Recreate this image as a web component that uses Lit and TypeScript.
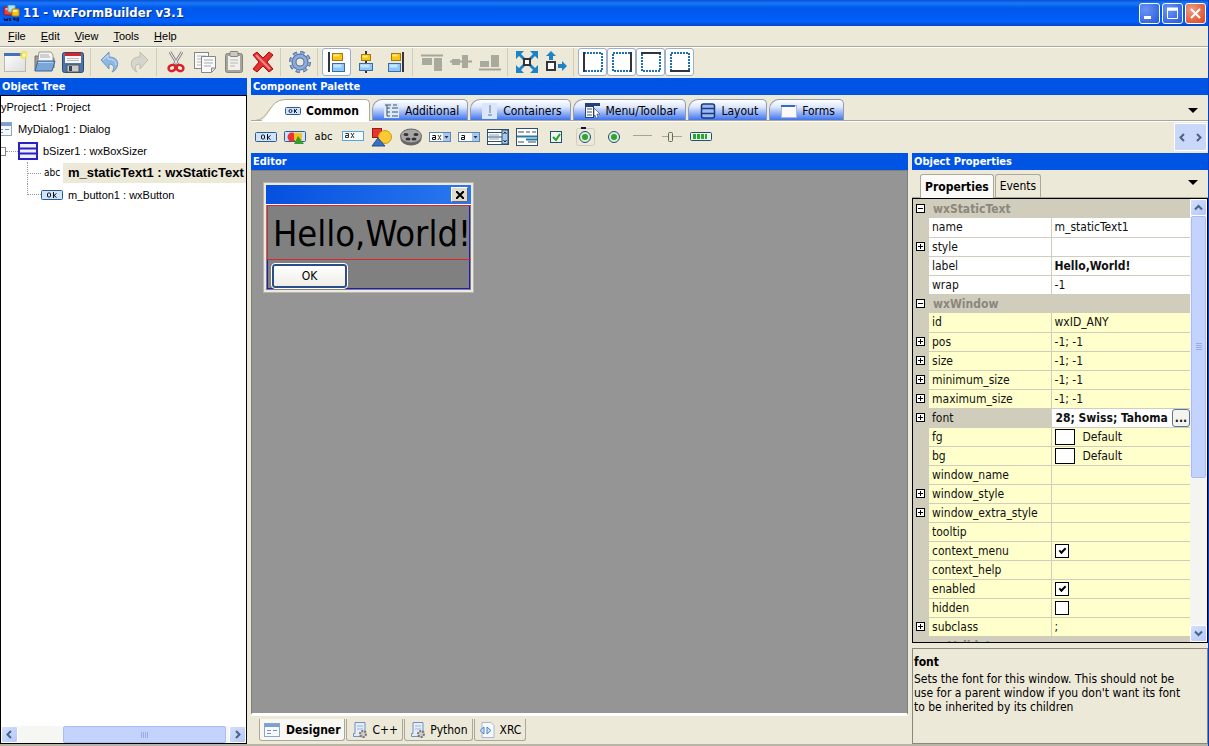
import { LitElement, html, css, svg, nothing, TemplateResult } from "lit";
import { customElement } from "lit/decorators.js";
import { classMap } from "lit/directives/class-map.js";

const icon = (w: number, h: number, body: unknown) =>
  html`<svg width=${w} height=${h} viewBox="0 0 ${w} ${h}" aria-hidden="true">${body}</svg>`;

const appIcon = icon(18, 17, svg`
  <rect x="1" y="2" width="8" height="8" rx="1" fill="#e5453a" stroke="#a11"/><rect x="2.500" y="3" width="4" height="2" fill="#ffa9a0"/>
  <rect x="5" y="0" width="7" height="7" rx="1" fill="#a9e3f5" stroke="#6ab"/>
  <rect x="9" y="4" width="7" height="7" rx="1" fill="#f6c21e" stroke="#b80"/><rect x="10" y="5" width="4" height="2" fill="#fff0a0"/>
  <path d="M1 13l1 3 1-2 1 2 1-3M6 13l2 3M8 13l-2 3M12 16v-3h-2M10 14.500h2M14 13v3h1.500v-3z" stroke="#112" fill="none"/>`);

const T = {
  fresh: icon(24, 24, svg`<defs><linearGradient id="nf" x2="1" y2="1"><stop stop-color="#fff"/><stop offset="1" stop-color="#dcdcdc"/></linearGradient></defs>
    <rect x="1.500" y="3.500" width="21" height="18" fill="url(#nf)" stroke="#b9b9b3"/><rect x="1" y="3" width="20" height="3" fill="#4272b8"/>
    <circle cx="21" cy="5" r="4" fill="#f4e04a" opacity=".8"/><circle cx="21" cy="5" r="2" fill="#fff7a0"/>`),
  open: icon(24, 24, svg`<path d="M3 21V6h6l2 2h11v10" fill="#9a9a96" stroke="#777"/><path d="M6 10l1-8h12l2 3v8H6z" fill="#f6f6f6" stroke="#999"/>
    <path d="M8 5h9M8 7h10" stroke="#aaa"/><path d="M3 21l3-10h17l-3 10z" fill="#7ba7d8" stroke="#3465a4"/><path d="M6 12.500h15" stroke="#b4d0ee"/>`),
  save: icon(24, 24, svg`<rect x="1.500" y="2.500" width="21" height="20" rx="2" fill="#4d74a8" stroke="#2b4a78"/><rect x="4" y="3" width="16" height="10" fill="#f6f6f6"/>
    <rect x="4" y="3" width="16" height="3" fill="#d22"/><path d="M6 8.500h12M6 10.500h12" stroke="#bbb"/><rect x="6" y="15" width="12" height="7" fill="#c9cbc9" stroke="#555"/><rect x="8" y="16" width="3" height="5" fill="#345"/>`),
  undo: icon(24, 24, svg`<path d="M3 10L11 2v5c7 0 10 4 8 10-1 2-2 4-5 5 3-4 2-8-3-8v5z" fill="#8fb9e2" stroke="#6f97c4"/>
    <path d="M5 10l5-5v4c5 0 8 2 8 6" stroke="#cfe2f4" fill="none"/>`),
  redo: icon(24, 24, svg`<path d="M21 10L13 2v5c-7 0-10 4-8 10 1 2 2 4 5 5-3-4-2-8 3-8v5z" fill="#d6d6ce" stroke="#bdbdb3"/>`),
  cut: icon(24, 24, svg`<path d="M6 2l8 13M18 2l-8 13" stroke="#8d8d8d" stroke-width="3"/><path d="M6 2l8 13M18 2l-8 13" stroke="#eee"/>
    <ellipse cx="8" cy="18" rx="3.500" ry="3" fill="none" stroke="#d5232b" stroke-width="2.500" transform="rotate(-25 8 18)"/>
    <ellipse cx="16" cy="18" rx="3.500" ry="3" fill="none" stroke="#d5232b" stroke-width="2.500" transform="rotate(25 16 18)"/>`),
  copy: icon(24, 24, svg`<rect x="1.500" y="2.500" width="14" height="16" fill="#fafafa" stroke="#85858a"/><path d="M4 6h9M4 9h4M4 12h4M4 15h4" stroke="#b5b5b5"/>
    <path d="M8.500 6.500h14v12l-4 4h-10z" fill="#fafafa" stroke="#85858a"/><path d="M11 10h9M11 13h9M11 16h7" stroke="#a9a9a9"/><path d="M18.500 22v-4h4" fill="#ddd" stroke="#85858a"/>`),
  paste: icon(24, 24, svg`<rect x="3.500" y="3.500" width="17" height="19" rx="2" fill="#a5a59c" stroke="#85857c"/><rect x="6" y="6" width="12" height="14" fill="#f0f0ec"/>
    <rect x="8" y="1.500" width="8" height="5" rx="1" fill="#c8c8c0" stroke="#85857c"/><path d="M8 10h8M8 13h8M8 16h5" stroke="#b8b8b0"/>`),
  del: icon(24, 24, svg`<path d="M2 5l4-3 6 6 6-6 4 3-6 7 6 7-4 3-6-6-6 6-4-3 6-7z" fill="#e03030" stroke="#a80d0d"/><path d="M5 5l14 14" stroke="#f58a8a" stroke-width="2"/>`),
  gear: icon(24, 24, svg`<circle cx="12" cy="12" r="9" fill="none" stroke="#4d6ea6" stroke-width="4" stroke-dasharray="4 3.068"/>
    <circle cx="12" cy="12" r="6" fill="none" stroke="#4d6ea6" stroke-width="5"/><circle cx="12" cy="12" r="6" fill="none" stroke="#8fabd6" stroke-width="3"/><circle cx="12" cy="12" r="9" fill="none" stroke="#8fabd6" stroke-width="2" stroke-dasharray="3 4.068" stroke-dashoffset="-.5"/>`),
};
const yellow = (x: number, y: number, w: number, h: number) =>
  svg`<rect x=${x} y=${y} width=${w} height=${h} fill="#ffc20e" stroke="#a47a10"/><rect x=${x + 1} y=${y + 1} width=${w - 4} height="2" fill="#ffee90"/>`;
const blue = (x: number, y: number, w: number, h: number) =>
  svg`<rect x=${x} y=${y} width=${w} height=${h} fill="#8cc6ff" stroke="#3b6ea5"/><rect x=${x + 1} y=${y + 1} width=${w - 4} height="3" fill="#c9e6ff"/>`;
const A = {
  left: icon(24, 24, svg`<path d="M4 2v20" stroke="#33333d" stroke-width="2"/>${yellow(7.5, 3.5, 10, 7)}${blue(7.5, 13.5, 12, 8)}`),
  mid: icon(24, 24, svg`<path d="M12 1v22" stroke="#33333d" stroke-width="2"/>${yellow(7.5, 4.5, 9, 6)}${blue(5.5, 13.5, 13, 7)}`),
  right: icon(24, 24, svg`<path d="M20 2v20" stroke="#33333d" stroke-width="2"/>${yellow(8.5, 3.5, 9, 7)}${blue(5.5, 13.5, 12, 8)}`),
  top: icon(24, 24, svg`<path d="M1 5.500h22" stroke="#a5a597" stroke-width="2"/><rect x="2" y="8" width="10" height="7" fill="#a9a99c"/><rect x="14" y="8" width="8" height="13" fill="#a9a99c"/>`),
  vmid: icon(24, 24, svg`<path d="M1 11.500h22" stroke="#a5a597" stroke-width="2"/><rect x="3" y="9" width="8" height="6" fill="#a9a99c"/><rect x="13" y="5" width="6" height="13" fill="#a9a99c"/>`),
  bottom: icon(24, 24, svg`<path d="M1 19.500h22" stroke="#a5a597" stroke-width="2"/><rect x="2" y="11" width="9" height="6" fill="#a9a99c"/><rect x="13" y="5" width="8" height="12" fill="#a9a99c"/>`),
  expand: icon(24, 24, svg`<g fill="#1c84c6" stroke="none"><path d="M1 1h8l-3 3 4 4-2 2-4-4-3 3zM23 1h-8l3 3-4 4 2 2 4-4 3 3zM1 23h8l-3-3 4-4-2-2-4 4-3-3zM23 23h-8l3-3-4-4 2-2 4 4 3-3z"/></g><rect x="9" y="9" width="6" height="6" fill="#fff" stroke="#33333d" stroke-width="2"/>`),
  stretch: icon(24, 24, svg`<g fill="#1c84c6"><path d="M7 1l5 5H9v4H5V6H2zM23 16l-5-5v3h-4v4h4v3z"/></g><rect x="3" y="12" width="8" height="8" fill="#fff" stroke="#33333d" stroke-width="2"/>`),
};
const border = (side: string) => icon(24, 24, svg`<rect x="3" y="3" width="18" height="18" fill="#fff" stroke="#1d6fb8" stroke-width="2" stroke-dasharray="2 1"/>
  <path d=${side} stroke="#33333d" stroke-width="2"/>`);
const borders = ["M3 2v20", "M21 2v20", "M2 3h20", "M2 21h20"].map(border);

const okIcon = (small = false) => small
  ? icon(16, 10, svg`<rect x=".5" y="1.500" width="15" height="7" rx="1" fill="#cfe4fb" stroke="#2b5a94"/><circle cx="5.500" cy="5" r="1.500" fill="none" stroke="#124"/><path d="M9.500 3v4M12 3l-2 2 2 2" stroke="#124" fill="none"/>`)
  : icon(22, 11, svg`<rect x=".5" y=".5" width="21" height="9" rx="1" fill="#cfe4fb" stroke="#2b5a94"/><rect x="6.500" y="3" width="3" height="4" rx="1" fill="none" stroke="#111"/><path d="M12.500 2v6M15.500 3.500l-2.500 2 2.500 2" stroke="#111" fill="none"/>`);
const sizer = (c: string, bg: string, w = 20) => icon(w, 18, svg`<rect x="1" y="1" width=${w - 2} height="16" fill=${bg} stroke=${c} stroke-width="2"/><path d="M1 6.500h${w - 2}M1 11.500h${w - 2}" stroke=${c} stroke-width="2"/>`);
const layoutIcon = icon(16, 16, svg`<rect x="1.500" y="1" width="13" height="14" rx="2" fill="#9db8f0" stroke="#173a80" stroke-width="1.500"/><path d="M1 5.500h14M1 10.500h14" stroke="#173a80" stroke-width="1.500"/>`);
const formIcon = icon(16, 16, svg`<rect x=".5" y="1.500" width="15" height="13" fill="#f7f9fc" stroke="#8aa4cc"/><rect x="1" y="2" width="14" height="3" fill="#7d9fd0"/><path d="M3 8.500h4M9 8.500h4M3 11.500h4" stroke="#7090c0"/>`);

const combo = (body: unknown) => icon(24, 24, svg`<rect x="1.500" y="7.500" width="21" height="9" fill="#fff" stroke="#5b83b5"/><rect x="15" y="8" width="7" height="8" fill="#a8c8ec"/><path d="M16.500 11h4l-2 2.500z" fill="#234"/>${body}`);
const littleA = svg`<path d="M4.500 10.500h3v4h-3v-2h3" stroke="#111" fill="none"/>`;
const P: TemplateResult[] = [
  okIcon(),
  icon(22, 14, svg`<rect x=".5" y="1.500" width="21" height="10" rx="1" fill="#cfe4fb" stroke="#2b5a94"/><circle cx="8" cy="7" r="4.500" fill="#e33"/><rect x="10" y="3" width="8" height="7" fill="#f6c21e"/><path d="M10 14l4-8 6 8z" fill="#3a9c2d"/>`),
  html`<span class="abc">abc</span>`,
  icon(24, 24, svg`<rect x="1.500" y="6.500" width="21" height="9" fill="#f4fbff" stroke="#5aa5d8"/><path d="M4.500 8.500h3v4h-3v-2h3M10 8l3 5M13 8l-3 5" stroke="#333" fill="none"/>`),
  icon(24, 24, svg`<rect x="2.500" y="3.500" width="9" height="9" fill="#e5352c" stroke="#9c1b14"/><circle cx="15" cy="12" r="6.500" fill="#f9ca34" stroke="#d39a10"/><path d="M2 21l6-8 7 8z" fill="#3b6fc0" stroke="#234d90"/>`),
  icon(24, 24, svg`<ellipse cx="12" cy="14" rx="10.500" ry="6.500" fill="#666"/><ellipse cx="12" cy="11" rx="10.500" ry="7" fill="#a7a7a7" stroke="#666"/><g fill="#333"><ellipse cx="7" cy="9.500" rx="2.500" ry="1.500"/><ellipse cx="17" cy="9.500" rx="2.500" ry="1.500"/><ellipse cx="9" cy="14" rx="2.500" ry="1.500"/><ellipse cx="15" cy="14" rx="2.500" ry="1.500"/></g>`),
  combo(svg`${littleA}<path d="M10 10l3 5M13 10l-3 5" stroke="#444"/>`),
  combo(littleA),
  icon(24, 24, svg`<rect x="1.500" y="4.500" width="21" height="15" fill="#fff" stroke="#2d5170"/><path d="M2 7.500h14M2 12h14M2 16.500h14" stroke="#2d5170"/><path d="M3 10h10M3 14h10" stroke="#8ba4b8"/><rect x="16" y="5" width="6" height="14" fill="#a8c8ec" stroke="#2d5170"/><path d="M17.500 9l1.500-2 1.500 2M17.500 15l1.500 2 1.500-2" fill="none" stroke="#123"/>`),
  icon(24, 24, svg`<rect x="1.500" y="3.500" width="21" height="17" fill="#fff" stroke="#2d5170"/><path d="M3 7h6M11 7h4M17 7h4M3 17h6M13 17h8" stroke="#446"/><path d="M2 11.500h20M11 14.500h11" stroke="#2a7aa8" stroke-width="2"/>`),
  icon(24, 24, svg`<rect x="6.500" y="6.500" width="11" height="11" fill="#eef5ee" stroke="#22506e"/><path d="M9 12l3 3 4-6" fill="none" stroke="#22a12c" stroke-width="2"/>`),
  icon(24, 24, svg`<rect x="3.500" y="3.500" width="18" height="17" rx="2" fill="none" stroke="#d0cdbd"/><path d="M8 3h5" stroke="#114" stroke-width="2"/><circle cx="12" cy="12" r="5.500" fill="#dce9dc" stroke="#22506e"/><circle cx="12" cy="12" r="3" fill="#2ba52f"/>`),
  icon(24, 24, svg`<circle cx="12" cy="12" r="5.500" fill="#dce9dc" stroke="#22506e"/><circle cx="12" cy="12" r="3" fill="#2ba52f"/>`),
  icon(24, 24, svg`<path d="M2 10.500h19" stroke="#a8a690"/>`),
  icon(24, 24, svg`<path d="M2 11.500h20" stroke="#a8a690"/><rect x="8.500" y="7.500" width="4" height="9" rx="1" fill="#e8e8d8" stroke="#666b50"/>`),
  icon(24, 24, svg`<rect x="1.500" y="7.500" width="21" height="8" rx="1" fill="#e8f2e8" stroke="#22506e"/><path d="M4 11.500h14" stroke="#2ba52f" stroke-width="5" stroke-dasharray="3 1"/>`),
];

const tabIcons = {
  tree: icon(16, 16, svg`<rect width="15" height="15" fill="#dfe9f5"/><path d="M1 2h6M3 2v11M3 5h3M3 9h3M3 13h3M8 5h6M8 9h6M8 13h6M9 2h4" stroke="#357"/>`),
  box: icon(16, 16, svg`<rect width="15" height="16" fill="#dce6f8"/><path d="M8 2v8M6 12h4" stroke="#579"/>`),
  menu: icon(16, 16, svg`<rect width="15" height="3" fill="#24407c"/><rect x=".5" y="3.500" width="8" height="11" fill="#fff" stroke="#24407c"/><path d="M2 6h5M2 9h5M2 12h5" stroke="#357"/><path d="M9 5l6 6h-3l1 4-2 0-1-3-1 1z" fill="#fff" stroke="#345" stroke-width=".6"/>`),
  form: icon(16, 16, svg`<rect x=".5" y="2.500" width="15" height="12" fill="#fafafa" stroke="#a7b8d6"/><rect y="2" width="14" height="2" fill="#3b68c0"/>`),
  script: icon(18, 18, svg`<path d="M4 1.500h10v12l-2 2H2.500v-3H4z" fill="#e3ecf8" stroke="#7392bf"/><path d="M6 5h6M6 8h6" stroke="#9db5d8"/><circle cx="12" cy="13" r="3" fill="#ccc" stroke="#777" stroke-width="2" stroke-dasharray="2 1"/>`),
  xml: icon(18, 18, svg`<path d="M3 1.500h9l3 3v12H3z" fill="#f7f9fc" stroke="#a9b8cc"/><path d="M5 6L1 9.500 5 13zM8 6l4 3.500L8 13z" fill="#cfe0f4" stroke="#4a86c8"/>`),
};

const chevron = (d: string) => icon(9, 9, svg`<path d=${d} fill="none" stroke="#4d6185" stroke-width="2"/>`);
const UP = "M1 6.500l3.500-3.500L8 6.500", DOWN = "M1 2.500L4.500 6 8 2.500", LEFT = "M6 1L2.500 4.500 6 8", RIGHT = "M3 1l3.500 3.500L3 8";

interface Row {
  name: string; value?: string; category?: boolean; nested?: boolean; open?: "+" | "-"; bold?: boolean;
  own?: boolean; kind?: "check" | "color" | "edit"; checked?: boolean;
}
const rows: Row[] = [
  { name: "wxStaticText", category: true, open: "-" },
  { name: "name", value: "m_staticText1", own: true },
  { name: "style", open: "+", own: true },
  { name: "label", value: "Hello,World!", bold: true, own: true },
  { name: "wrap", value: "-1", own: true },
  { name: "wxWindow", category: true, open: "-" },
  { name: "id", value: "wxID_ANY" },
  { name: "pos", value: "-1; -1", open: "+" },
  { name: "size", value: "-1; -1", open: "+" },
  { name: "minimum_size", value: "-1; -1", open: "+" },
  { name: "maximum_size", value: "-1; -1", open: "+" },
  { name: "font", value: "28; Swiss; Tahoma", open: "+", kind: "edit" },
  { name: "fg", value: "Default", kind: "color" },
  { name: "bg", value: "Default", kind: "color" },
  { name: "window_name" },
  { name: "window_style", open: "+" },
  { name: "window_extra_style", open: "+" },
  { name: "tooltip" },
  { name: "context_menu", kind: "check", checked: true },
  { name: "context_help" },
  { name: "enabled", kind: "check", checked: true },
  { name: "hidden", kind: "check" },
  { name: "subclass", value: ";", open: "+" },
  { name: "Validator", category: true, nested: true, open: "-" },
];

const shared = css`
  :host { display: block; box-sizing: border-box; }
  *, *::before, *::after { box-sizing: border-box; }
  button, input { font: inherit; color: inherit; margin: 0; padding: 0; border: 0; background: none; border-radius: 0; }
  svg { display: block; flex: none; }
  .caption { height: 17px; background: #0054e3; color: #fff; font: bold 11px/17px var(--ui); padding-left: 2px; margin: 0; white-space: nowrap; flex: none; }
  .sb { background: linear-gradient(135deg, #d3e0fe, #b4c8f6); border: 1px solid #fff; border-radius: 2px; display: flex; align-items: center; justify-content: center; flex: none; }
  .thumb { background: #c3d3fd; border: 1px solid #a9bdf0; border-radius: 2px; display: flex; align-items: center; justify-content: center; }
`;

@customElement("object-tree")
class ObjectTree extends LitElement {
  static styles = [shared, css`
    :host { display: flex; flex-direction: column; min-height: 0; }
    .body { flex: 1; min-height: 0; background: #fff; border: 1px solid #000; display: flex; flex-direction: column; }
    ul { list-style: none; margin: 0; padding: 0; flex: 1; overflow: hidden; }
    li { height: 22px; display: flex; align-items: center; font: 11px/22px var(--gothic); white-space: nowrap; }
    .sel { background: #ece9d8; font: bold 13px/20px var(--gothic); flex: 1; overflow: hidden; }
    .gap { padding-left: 5px; }
    .abc { font: 10px/20px var(--ui); width: 22px; text-align: center; }
    .half { width: 11px; height: 16px; overflow: hidden; display: flex; justify-content: flex-end; margin-right: 6px; }
    .exp { width: 5px; height: 9px; border: 1px solid #888; border-left: 0; flex: none; }
    .dots { width: 12px; border-top: 1px dotted #999; }
    .stem { width: 14px; height: 22px; border-left: 1px dotted #999; margin-left: 26px; display: flex; align-items: center; }
    .stem::after { content: ""; flex: 1; border-top: 1px dotted #999; }
    .last { align-self: flex-start; height: 11px; align-items: flex-end; }
    .hbar { height: 17px; display: flex; background: #f6f6f2; }
    .hbar .sb { width: 17px; }
    .track { flex: 1; display: flex; padding: 0 3px 0 45px; }
    .thumb { flex: 1; }
  `];
  render() {
    return html`
      <h2 class="caption">Object Tree</h2>
      <div class="body">
        <ul>
          <li>yProject1 : Project</li>
          <li><span class="half">${formIcon}</span>MyDialog1 : Dialog</li>
          <li><span class="exp"></span><span class="dots"></span>${sizer("#2a1fc0", "#eef")}<span class="gap">bSizer1 : wxBoxSizer</span></li>
          <li><span class="stem"></span><span class="abc">abc</span><span class="gap sel">m_staticText1 : wxStaticText</span></li>
          <li><span class="stem last"></span>${okIcon()}<span class="gap">m_button1 : wxButton</span></li>
        </ul>
        <div class="hbar">
          <button class="sb" aria-label="Scroll left">${chevron(LEFT)}</button>
          <div class="track"><div class="thumb">${icon(8, 6, svg`<path d="M.5 0v6M2.500 0v6M4.500 0v6M6.500 0v6" stroke="#93acec"/>`)}</div></div>
          <button class="sb" aria-label="Scroll right">${chevron(RIGHT)}</button>
        </div>
      </div>`;
  }
}

@customElement("component-palette")
class ComponentPalette extends LitElement {
  static styles = [shared, css`
    .tabs { display: flex; align-items: flex-end; height: 26px; border-bottom: 1px solid #aca899; padding-left: 4px; }
    .tab { height: 21px; display: flex; align-items: center; gap: 5px; padding: 1px 8px 0 11px; font: 12px/20px var(--ui); margin-right: 2px;
      border: 1px solid #8d9bb5; border-bottom: 0; border-radius: 10px 5px 0 0; background: linear-gradient(#fff, #dde7fd 35%, #3f74ee); }
    .on { background: #fff; border-left: 0; border-color: #aca899; border-radius: 0 5px 0 0; font-weight: bold; height: 22px; padding: 0 10px 0 0; margin-bottom: -1px; }
    .slant { margin-bottom: -1px; }
    .drop { margin: 0 8px 4px auto; padding: 2px; }
    .row { display: flex; height: 31px; border-top: 1px solid #fff; }
    .items { flex: 1; display: flex; align-items: center; }
    .item { width: 29px; height: 26px; display: flex; align-items: center; justify-content: center; }
    .abc { font: 11px/24px var(--ui); }
    .nav { display: flex; background: #c9d7f8; border: 1px solid #fff; width: 33px; margin: 1px; align-items: center; justify-content: space-around; }
  `];
  render() {
    const tabs: [string, TemplateResult][] = [["Additional", tabIcons.tree], ["Containers", tabIcons.box],
      ["Menu/Toolbar", tabIcons.menu], ["Layout", layoutIcon], ["Forms", tabIcons.form]];
    const names = ["Button", "Bitmap button", "Static text", "Text", "Bitmap", "Animation", "Combo", "Choice", "List", "List control", "Check box", "Radio box", "Radio", "Line", "Slider", "Gauge"];
    return html`
      <h2 class="caption">Component Palette</h2>
      <div class="tabs" role="tablist">
        <span class="slant">${icon(30, 22, svg`<path d="M6 22C14 19 16 .5 30 .5V22z" fill="#fff" stroke="none"/><path d="M0 21.500C14 21.500 14 .5 30 .5" fill="none" stroke="#aca899"/>`)}</span>
        <button class="tab on" role="tab" aria-selected="true">${okIcon(true)}Common</button>
        ${tabs.map(([t, i]) => html`<button class="tab" role="tab">${i}${t}</button>`)}
        <button class="drop" aria-label="More tabs">${icon(10, 6, svg`<path d="M0 0h10L5 5z" fill="#000"/>`)}</button>
      </div>
      <div class="row">
        <div class="items">${P.map((p, i) => html`<button class="item" aria-label=${names[i]}>${p}</button>`)}</div>
        <div class="nav"><button aria-label="Previous">${chevron(LEFT)}</button><button aria-label="Next">${chevron(RIGHT)}</button></div>
      </div>`;
  }
}

@customElement("form-editor")
class FormEditor extends LitElement {
  static styles = [shared, css`
    :host { display: flex; flex-direction: column; min-height: 0; }
    .canvas { flex: 1; min-height: 0; background: #959595; border: 1px solid #80807a; border-bottom: 2px solid #fff; padding: 11px; }
    .dialog { width: 211px; border: 3px solid #ece9e0; outline: 1px solid #b8b5a8; outline-offset: -1px; background: #808080; }
    .bar { height: 20px; border-bottom: 1px solid #fff; background: linear-gradient(90deg, #0550de, #2a78f0); display: flex; justify-content: flex-end; align-items: center; padding-right: 3px; }
    .close { width: 17px; height: 15px; background: #e0ddd0; border: 1px solid #fff; border-right-color: #666; border-bottom-color: #666; display: flex; align-items: center; justify-content: center; }
    .sizer { border: 1px solid #2018c0; border-top: 0; margin: 0 1px 1px; }
    .label { border: 1px solid #e0242c; border-right: 0; height: 55px; margin: 0 -2px 0 -1px; padding-left: 5px; font: 36px/55px var(--ui); color: #000; white-space: nowrap; }
    .ok { display: block; margin: 4px 4px 0; width: 75px; height: 24px; background: linear-gradient(#fff, #eeede6); border: 2px solid #2a4f86; border-radius: 3px; font: 12px/18px var(--ui); outline: 1px solid #fff; }
    .tabs { display: flex; height: 29px; padding: 3px 0 3px 8px; background: #ece9d8; border-top: 1px solid #fff; }
    .tab { display: flex; align-items: center; gap: 3px; border: 1px solid #aca899; border-top: 0; border-radius: 0 0 3px 3px; padding: 0 4px; margin-right: 1px; font: 12px/20px var(--ui); }
    .on { background: #f8f7f2; font-weight: bold; gap: 6px; }
  `];
  render() {
    return html`
      <h2 class="caption">Editor</h2>
      <div class="canvas">
        <div class="dialog">
          <div class="bar"><button class="close" aria-label="Close dialog">${icon(8, 8, svg`<path d="M0 0l8 8M8 0L0 8" stroke="#000" stroke-width="2"/>`)}</button></div>
          <div class="sizer">
            <div class="label">Hello,World!</div>
            <button class="ok">OK</button>
          </div>
        </div>
      </div>
      <div class="tabs" role="tablist">
        <button class="tab on" role="tab" aria-selected="true">${formIcon}Designer</button>
        <button class="tab" role="tab">${tabIcons.script}C++</button>
        <button class="tab" role="tab">${tabIcons.script}Python</button>
        <button class="tab" role="tab">${tabIcons.xml}XRC</button>
      </div>`;
  }
}

@customElement("object-properties")
class ObjectProperties extends LitElement {
  static styles = [shared, css`
    :host { display: flex; flex-direction: column; min-height: 0; }
    .tabs { display: flex; height: 28px; padding: 4px 0 0 8px; border-bottom: 1px solid #aca899; flex: none; }
    .tab { border: 1px solid #aca899; border-bottom: 0; border-radius: 3px 3px 0 0; padding: 0 4px; margin-right: 1px; font: 12px/20px var(--ui); height: 23px; }
    .on { font-weight: bold; background: #fbfaf6; height: 24px; }
    .drop { margin: 0 8px 5px auto; padding: 2px; }
    .grid { flex: 1; min-height: 0; border: 1px solid #000; display: flex; overflow: hidden; background: #d0cdbc; }
    .clip { flex: 1; min-width: 0; overflow: hidden; }
    table { width: 100%; table-layout: fixed; border-collapse: collapse; font: 12px/18px var(--ui); color: #101010; }
    .c0 { width: 16px; } .c1 { width: 122px; }
    tr { height: 19px; }
    td, th { padding: 0; height: 19px; white-space: nowrap; overflow: hidden; font-weight: normal; text-align: left; }
    .name, .val { background: #ffffcc; border-bottom: 1px solid #d0cdbc; padding-left: 3px; }
    .val { border-left: 1px solid #d0cdbc; }
    .own { background: #fff; }
    .cat { font-weight: bold; color: #8a887c; padding-left: 4px; }
    .nested { padding-left: 0; }
    .nested .box { display: inline-block; vertical-align: middle; margin-right: 7px; }
    .bold { font-weight: bold; }
    .picked .name { background: #d0cdbc; }
    .picked .val { background: #fff; padding-left: 4px; }
    .box { width: 9px; height: 9px; margin-left: 3px; }
    .edit { display: flex; height: 18px; }
    .text { flex: 1; min-width: 0; font-weight: bold; height: 18px; }
    .more { width: 18px; height: 18px; border: 1px solid #56749c; border-radius: 3px; background: #f4f3ee; font: bold 12px/10px var(--ui); }
    .color { display: flex; align-items: center; gap: 8px; }
    .color::before { content: ""; width: 20px; height: 16px; border: 1px solid #000; background: #fff; }
    .check { display: block; appearance: none; width: 14px; height: 14px; border: 1px solid #000; background: #fff; }
    .check:checked::before { content: ""; display: block; width: 7px; height: 4px; border: solid #000; border-width: 0 0 2px 2px; rotate: -45deg; margin: 3px 0 0 3px; }
    .vbar { width: 17px; display: flex; flex-direction: column; background: #f4f4f0; }
    .vbar .sb { height: 17px; }
    .track { flex: 1; }
    .thumb { height: 64%; margin: 0 1px; }
    .help { flex: none; margin-top: 5px; height: 96px; border: 1px solid #8a887c; padding: 5px 20px 0 1px; font: 12px/14px var(--ui); }
    .help h3 { margin: 0; font: bold 12px/16px var(--ui); padding-bottom: 2px; }
    .help p { margin: 0; }
  `];
  private box(kind: string | undefined) {
    return kind ? html`<div class="box">${icon(9, 9, svg`<rect x=".5" y=".5" width="8" height="8" fill="#fff" stroke="#000"/><path d=${kind === "+" ? "M2 4.500h5M4.500 2v5" : "M2 4.500h5"} stroke="#000"/>`)}</div>` : nothing;
  }
  private value(r: Row) {
    if (r.kind === "check") return html`<input class="check" type="checkbox" id=${r.name} .checked=${!!r.checked}>`;
    if (r.kind === "color") return html`<div class="color">${r.value}</div>`;
    if (r.kind === "edit") return html`<div class="edit"><input class="text" id=${r.name} .value=${r.value ?? ""}><button class="more" aria-label="Edit font">...</button></div>`;
    return r.value ?? nothing;
  }
  private row(r: Row) {
    if (r.nested) return html`<tr><td></td><th class="cat nested" colspan="2">${this.box(r.open)}${r.name}</th></tr>`;
    if (r.category) return html`<tr><td>${this.box(r.open)}</td><th class="cat" colspan="2">${r.name}</th></tr>`;
    return html`<tr class=${classMap({ picked: r.kind === "edit" })}><td>${this.box(r.open)}</td>
      <th class=${classMap({ name: true, own: !!r.own })}>${r.kind === "check" || r.kind === "edit" ? html`<label for=${r.name}>${r.name}</label>` : r.name}</th>
      <td class=${classMap({ val: true, own: !!r.own, bold: !!r.bold })}>${this.value(r)}</td></tr>`;
  }
  render() {
    return html`
      <h2 class="caption">Object Properties</h2>
      <div class="tabs" role="tablist">
        <button class="tab on" role="tab" aria-selected="true">Properties</button>
        <button class="tab" role="tab">Events</button>
        <button class="drop" aria-label="More tabs">${icon(10, 6, svg`<path d="M0 0h10L5 5z" fill="#000"/>`)}</button>
      </div>
      <div class="grid">
        <div class="clip">
          <table>
            <colgroup><col class="c0"><col class="c1"><col></colgroup>
            <tbody>${rows.map(r => this.row(r))}</tbody>
          </table>
        </div>
        <div class="vbar">
          <button class="sb" aria-label="Scroll up">${chevron(UP)}</button>
          <div class="track"><div class="thumb">${icon(6, 8, svg`<path d="M0 .5h6M0 2.500h6M0 4.500h6M0 6.500h6" stroke="#93acec"/>`)}</div></div>
          <button class="sb" aria-label="Scroll down">${chevron(DOWN)}</button>
        </div>
      </div>
      <section class="help"><h3>font</h3><p>Sets the font for this window. This should not be use for a parent window if you don't want its font to be inherited by its children</p></section>`;
  }
}

@customElement("app-root")
class AppRoot extends LitElement {
  static styles = [shared, css`
    :host { --ui: "DejaVu Sans Condensed", "DejaVu Sans", sans-serif; --gothic: "Liberation Sans", sans-serif;
      display: flex; flex-direction: column; height: 100vh; background: #ece9d8; color: #000; border-right: 1px solid #0040c8; overflow: hidden; }
    .title { height: 26px; flex: none; display: flex; align-items: center; gap: 2px; padding: 0 3px; background: linear-gradient(#0a4fd0, #1a78fb 3px, #0058ea 8px, #0060fa 22px, #0046c8); margin-right: -1px; }
    h1 { margin: 0; flex: 1; font: bold 13px/24px var(--ui); color: #fff; text-shadow: 1px 1px #0a2f80; }
    .win { width: 21px; height: 21px; border: 1px solid #fff; border-radius: 3px; background: radial-gradient(at 30% 30%, #6a94f5, #2458d8); display: flex; align-items: center; justify-content: center; }
    .shut { background: radial-gradient(at 30% 30%, #f09a80, #d8431c); }
    .menu { height: 21px; flex: none; display: flex; gap: 15px; padding-left: 8px; border-bottom: 1px solid #aca899; font: 11px/18px var(--gothic); }
    .menu u { text-underline-offset: 1px; }
    .tools { height: 31px; flex: none; display: flex; align-items: flex-start; border-top: 1px solid #fff; }
    .tool { width: 29px; height: 28px; display: flex; align-items: center; justify-content: center; border: 1px solid transparent; }
    .on { background: #fff; border-color: #9db0cc; border-radius: 3px; }
    .sep { width: 8px; height: 28px; border-left: 1px solid #d0cdbc; margin-left: 3px; margin-right: -3px; }
    .main { flex: 1; min-height: 0; display: grid; grid-template-columns: 247px minmax(0, 1fr) 296px; grid-template-rows: 74px minmax(0, 1fr); column-gap: 4px; row-gap: 1px; }
    .tree { grid-row: 1 / 3; } .palette { grid-column: 2 / 4; }
    .foot { height: 2px; flex: none; background: #b8b5a6; }
  `];
  private tool(i: TemplateResult, label: string, on = false) {
    return html`<button class=${classMap({ tool: true, on })} aria-label=${label}>${i}</button>`;
  }
  render() {
    const sep = html`<span class="sep"></span>`;
    return html`
      <header class="title">${appIcon}<h1>11 - wxFormBuilder v3.1</h1>
        <button class="win" aria-label="Minimize">${icon(13, 13, svg`<rect x="1" y="9" width="7" height="3" fill="#fff"/>`)}</button>
        <button class="win" aria-label="Maximize">${icon(13, 13, svg`<path d="M1.500 1.500h10v10h-10zM1 3h11" fill="none" stroke="#fff" /><path d="M1 2h11" stroke="#fff" stroke-width="3"/>`)}</button>
        <button class="win shut" aria-label="Close">${icon(13, 13, svg`<path d="M2 2l9 9M11 2l-9 9" stroke="#fff" stroke-width="2"/>`)}</button>
      </header>
      <nav class="menu">${["File", "Edit", "View", "Tools", "Help"].map(m => html`<button><u>${m[0]}</u>${m.slice(1)}</button>`)}</nav>
      <div class="tools">
        ${this.tool(T.fresh, "New")}${this.tool(T.open, "Open")}${this.tool(T.save, "Save")}${sep}
        ${this.tool(T.undo, "Undo")}${this.tool(T.redo, "Redo")}${sep}
        ${this.tool(T.cut, "Cut")}${this.tool(T.copy, "Copy")}${this.tool(T.paste, "Paste")}${this.tool(T.del, "Delete")}${sep}
        ${this.tool(T.gear, "Generate")}${sep}
        ${this.tool(A.left, "Align left", true)}${this.tool(A.mid, "Align center")}${this.tool(A.right, "Align right")}${sep}
        ${this.tool(A.top, "Align top")}${this.tool(A.vmid, "Align middle")}${this.tool(A.bottom, "Align bottom")}${sep}
        ${this.tool(A.expand, "Expand")}${this.tool(A.stretch, "Stretch")}${sep}
        ${["Left", "Right", "Top", "Bottom"].map((s, i) => this.tool(borders[i], s + " border", true))}
      </div>
      <main class="main">
        <object-tree class="tree"></object-tree>
        <component-palette class="palette"></component-palette>
        <form-editor></form-editor>
        <object-properties></object-properties>
      </main>
      <div class="foot"></div>`;
  }
}
